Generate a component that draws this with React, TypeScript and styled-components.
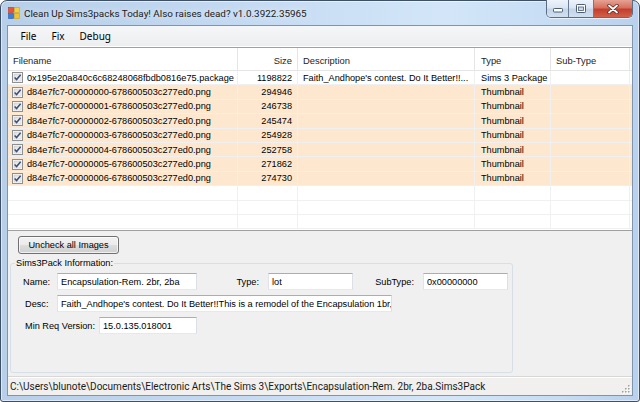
import { FC } from "react";
import styled, { createGlobalStyle } from "styled-components";

interface IPackageFile {
  name: string;
  size: string;
  description: string;
  type: string;
  subType: string;
  isImage: boolean;
}

const thumbSizes = ["294946", "246738", "245474", "254928", "252758", "271862", "274730"];

const files: IPackageFile[] = [
  {
    name: "0x195e20a840c6c68248068fbdb0816e75.package",
    size: "1198822",
    description: "Faith_Andhope's contest. Do It Better!!...",
    type: "Sims 3 Package",
    subType: "",
    isImage: false,
  },
  ...thumbSizes.map((size, i) => ({
    name: `d84e7fc7-0000000${i}-678600503c277ed0.png`,
    size,
    description: "",
    type: "Thumbnail",
    subType: "",
    isImage: true,
  })),
];

const FILLER_ROWS = 3;

const AppIcon: FC = () => (
  <svg width="12" height="12" viewBox="0 0 12 12">
    <rect x="0.5" y="0.5" width="5" height="5" fill="#e8553a" stroke="#b23a22" strokeWidth="0.6" />
    <rect x="6.5" y="0.5" width="5" height="5" fill="#f7cf3a" stroke="#c9a020" strokeWidth="0.6" />
    <rect x="0.5" y="6.5" width="5" height="5" fill="#3d7fd6" stroke="#275ea8" strokeWidth="0.6" />
    <rect x="6.5" y="6.5" width="5" height="5" fill="#f5c12c" stroke="#c9a020" strokeWidth="0.6" />
  </svg>
);

const MinGlyph: FC = () => (
  <svg width="10" height="5" viewBox="0 0 10 5">
    <rect x="0.5" y="0.5" width="9" height="3.5" rx="0.8" fill="#fff" stroke="#4d5d72" strokeWidth="1" />
  </svg>
);

const MaxGlyph: FC = () => (
  <svg width="10" height="9" viewBox="0 0 10 9">
    <rect x="0.5" y="0.5" width="9" height="8" rx="0.8" fill="#fff" stroke="#4d5d72" strokeWidth="1" />
    <rect x="2.5" y="3" width="5" height="3.5" fill="#c9d8ea" stroke="#4d5d72" strokeWidth="0.8" />
  </svg>
);

const CloseGlyph: FC = () => (
  <svg width="12" height="10" viewBox="0 0 12 10">
    <path d="M2 1.5 L10 8.5 M10 1.5 L2 8.5" stroke="#5a2a24" strokeWidth="3.4" strokeLinecap="round" />
    <path d="M2 1.5 L10 8.5 M10 1.5 L2 8.5" stroke="#fff" strokeWidth="1.8" strokeLinecap="round" />
  </svg>
);

const CheckMark: FC = () => (
  <svg width="11" height="11" viewBox="0 0 11 11">
    <defs>
      <linearGradient id="cbFill" x1="0" y1="0" x2="1" y2="1">
        <stop offset="0" stopColor="#dcdcdc" />
        <stop offset="1" stopColor="#fbfbfb" />
      </linearGradient>
    </defs>
    <rect x="0.5" y="0.5" width="10" height="10" fill="#fff" stroke="#8e8f8f" />
    <rect x="2" y="2" width="7" height="7" fill="url(#cbFill)" stroke="#c6c6c6" strokeWidth="0.6" />
    <path d="M2.6 5.4 L4.6 7.6 L8.6 2.8" fill="none" stroke="#3c4f7a" strokeWidth="1.5" />
  </svg>
);

const SizeGrip: FC = () => (
  <svg width="10" height="10" viewBox="0 0 10 10">
    {[
      [8, 2],
      [8, 5],
      [5, 5],
      [8, 8],
      [5, 8],
      [2, 8],
    ].map(([x, y]) => (
      <g key={`${x}-${y}`}>
        <rect x={x} y={y} width="1.5" height="1.5" fill="#fff" />
        <rect x={x - 1} y={y - 1} width="1.5" height="1.5" fill="#a0a0a0" />
      </g>
    ))}
  </svg>
);

const App: FC = () => {
  return (
    <>
      <GlobalStyle />
      <Window>
        <TitleBar>
          <AppIcon />
          <Title>Clean Up Sims3packs Today! Also raises dead? v1.0.3922.35965</Title>
          <CaptionButtons>
            <CaptionButton $w={21} $kind="min">
              <MinGlyph />
            </CaptionButton>
            <CaptionButton $w={25} $kind="max">
              <MaxGlyph />
            </CaptionButton>
            <CaptionButton $w={39} $kind="close">
              <CloseGlyph />
            </CaptionButton>
          </CaptionButtons>
        </TitleBar>

        <Client>
          <MenuBar>
            <MenuItem>File</MenuItem>
            <MenuItem>Fix</MenuItem>
            <MenuItem>Debug</MenuItem>
          </MenuBar>

          <ListView>
            <HeaderRow>
              <HeaderCell>Filename</HeaderCell>
              <HeaderCell $right>Size</HeaderCell>
              <HeaderCell>Description</HeaderCell>
              <HeaderCell $pad={6}>Type</HeaderCell>
              <HeaderCell>Sub-Type</HeaderCell>
            </HeaderRow>
            {files.map((f) => (
              <Row key={f.name} $peach={f.isImage}>
                <NameCell>
                  <CheckMark />
                  <span>{f.name}</span>
                </NameCell>
                <Cell $right>{f.size}</Cell>
                <Cell>{f.description}</Cell>
                <Cell $pad={6}>{f.type}</Cell>
                <Cell>{f.subType}</Cell>
              </Row>
            ))}
            {Array.from({ length: FILLER_ROWS }).map((_, i) => (
              <Row key={`filler-${i}`}>
                <Cell />
                <Cell />
                <Cell />
                <Cell />
                <Cell />
              </Row>
            ))}
          </ListView>

          <Panel>
            <PushButton>Uncheck all Images</PushButton>
            <GroupBox>
              <legend>Sims3Pack Information:</legend>
              <FieldRow>
                <FieldLabel $w={46} $indent={12}>
                  Name:
                </FieldLabel>
                <TextBox $w={140}>Encapsulation-Rem. 2br, 2ba</TextBox>
                <FieldLabel $w={71} $right>
                  Type:
                </FieldLabel>
                <TextBox $w={85}>lot</TextBox>
                <FieldLabel $w={70} $right>
                  SubType:
                </FieldLabel>
                <TextBox $w={85}>0x00000000</TextBox>
              </FieldRow>
              <FieldRow>
                <FieldLabel $w={46} $indent={14}>
                  Desc:
                </FieldLabel>
                <TextBox $w={335}>
                  Faith_Andhope's contest. Do It Better!!This is a remodel of the Encapsulation 1br,
                </TextBox>
              </FieldRow>
              <FieldRow>
                <FieldLabel $w={88} $indent={14}>
                  Min Req Version:
                </FieldLabel>
                <TextBox $w={98}>15.0.135.018001</TextBox>
              </FieldRow>
            </GroupBox>
          </Panel>

          <StatusBar>
            <StatusText>
              C:\Users\blunote\Documents\Electronic Arts\The Sims 3\Exports\Encapsulation-Rem. 2br, 2ba.Sims3Pack
            </StatusText>
            <SizeGrip />
          </StatusBar>
        </Client>
      </Window>
    </>
  );
};

export default App;

const captionFont = `Roboto, "Noto Sans", sans-serif`;
const menuFont = `"Noto Sans", sans-serif`;
const listFont = `"Liberation Sans", Arial, sans-serif`;
const columns = "230px 60px 177px 76px 79px";

const GlobalStyle = createGlobalStyle`
  html, body {
    margin: 0;
    padding: 0;
    background: #fff;
    overflow: hidden;
  }
`;

const Window = styled.div`
  width: 640px;
  height: 402px;
  box-sizing: border-box;
  display: flex;
  flex-direction: column;
  padding: 0 6px 5px;
  border: 1px solid #3e5068;
  border-radius: 7px 7px 3px 3px;
  background: linear-gradient(
    to right,
    #b7cfe9 0%,
    #c3d9f1 35%,
    #d3e6f9 70%,
    #c5dcf3 88%,
    #b9d1ec 100%
  );
  box-shadow: inset 0 0 0 1px rgba(255, 255, 255, 0.55);
`;

const TitleBar = styled.div`
  height: 24px;
  display: flex;
  align-items: center;
  padding-left: 1px;
  gap: 4px;
`;

const Title = styled.div`
  font-family: ${captionFont};
  font-size: 9.9px;
  color: #1a1a1a;
  white-space: nowrap;
  text-shadow: 0 0 6px rgba(255, 255, 255, 0.9);
`;

const CaptionButtons = styled.div`
  display: flex;
  align-self: flex-start;
  margin: -1px 0 0 auto;
  border: 1px solid #5b6d84;
  border-top: none;
  border-radius: 0 0 5px 5px;
  overflow: hidden;
  box-shadow: 0 1px 0 rgba(255, 255, 255, 0.6);
`;

interface CaptionProps {
  $w: number;
  $kind: "min" | "max" | "close";
}

const CaptionButton = styled.div<CaptionProps>`
  width: ${(p) => p.$w}px;
  height: 17px;
  display: flex;
  align-items: center;
  justify-content: center;
  box-sizing: border-box;
  border-left: ${(p) => (p.$kind === "min" ? "none" : "1px solid #6a7c93")};
  background: ${(p) =>
    p.$kind === "close"
      ? "linear-gradient(#e5a394 0%, #d86f5d 45%, #c23f2c 55%, #d1604b 100%)"
      : "linear-gradient(#eef3fa 0%, #dbe6f3 45%, #c4d5e9 55%, #d1e0f1 100%)"};
  padding-top: ${(p) => (p.$kind === "min" ? "4px" : "0")};
`;

const Client = styled.div`
  flex: 1;
  min-height: 0;
  display: flex;
  flex-direction: column;
  background: #f0f0f0;
  border: 1px solid #7f94ad;
`;

const MenuBar = styled.div`
  height: 20px;
  display: flex;
  align-items: center;
  padding-left: 5px;
  background: linear-gradient(#f5f6f7, #eceef0);
  border-bottom: 1px solid #ffffff;
`;

const MenuItem = styled.div`
  font-family: ${menuFont};
  font-size: 10px;
  color: #000;
  padding: 0 7.5px;
`;

const ListView = styled.div`
  height: 182px;
  overflow: hidden;
  background: #fff;
  border-top: 1px solid #a0a0a0;
  border-bottom: 1px solid #a0a0a0;
`;

const HeaderRow = styled.div`
  display: grid;
  grid-template-columns: ${columns};
  height: 23px;
  border-bottom: 1px solid #e5e5e5;
  box-sizing: border-box;
`;

interface CellProps {
  $right?: boolean;
  $pad?: number;
}

const HeaderCell = styled.div<CellProps>`
  display: flex;
  align-items: center;
  justify-content: ${(p) => (p.$right ? "flex-end" : "flex-start")};
  padding: ${(p) => (p.$right ? "2px 5px 0 0" : `2px 0 0 ${p.$pad ?? 5}px`)};
  border-right: 1px solid #e5e5e5;
  font-family: ${listFont};
  font-size: 9.4px;
  color: #1e1e1e;
`;

const Row = styled.div<{ $peach?: boolean }>`
  display: grid;
  grid-template-columns: ${columns};
  height: 14.4px;
  box-sizing: border-box;
  background: ${(p) => (p.$peach ? "#fde8cf" : "#fff")};
  border-bottom: 1px solid #f0f0f0;
`;

const Cell = styled.div<CellProps>`
  display: flex;
  align-items: center;
  justify-content: ${(p) => (p.$right ? "flex-end" : "flex-start")};
  padding: ${(p) => (p.$right ? "0 5px 0 0" : `0 0 0 ${p.$pad ?? 5}px`)};
  border-right: 1px solid #f0f0f0;
  font-family: ${listFont};
  font-size: 9.2px;
  color: #000;
  white-space: nowrap;
  overflow: hidden;
`;

const NameCell = styled(Cell)`
  padding-left: 4px;
  gap: 4px;
`;

const Panel = styled.div`
  flex: 1;
  min-height: 0;
  display: flex;
  flex-direction: column;
  align-items: flex-start;
  padding: 5px 0 3px 2px;
`;

const PushButton = styled.div`
  margin-left: 8px;
  width: 101px;
  height: 18px;
  box-sizing: border-box;
  display: flex;
  align-items: center;
  justify-content: center;
  border: 1px solid #707070;
  border-radius: 3px;
  background: linear-gradient(#f2f2f2 0%, #ebebeb 48%, #dddddd 52%, #cfcfcf 100%);
  box-shadow: inset 0 0 0 1px rgba(255, 255, 255, 0.7);
  font-family: ${listFont};
  font-size: 9.2px;
  color: #000;
`;

const GroupBox = styled.fieldset`
  flex: 1;
  width: 503px;
  box-sizing: border-box;
  margin: 4px 0 0;
  padding: 0;
  border: 1px solid #d5dfe5;
  border-radius: 3px;
  display: flex;
  flex-direction: column;
  gap: 5px;

  legend {
    margin-left: 4px;
    padding: 0 1px;
    font-family: ${listFont};
    font-size: 9.2px;
    color: #000;
  }
`;

const FieldRow = styled.div`
  display: flex;
  align-items: center;
  &:first-of-type {
    margin-top: 5px;
  }
`;

interface LabelProps {
  $w: number;
  $indent?: number;
  $right?: boolean;
}

const FieldLabel = styled.div<LabelProps>`
  width: ${(p) => p.$w}px;
  box-sizing: border-box;
  padding: ${(p) => (p.$right ? "0 9px 0 0" : `0 0 0 ${p.$indent ?? 0}px`)};
  text-align: ${(p) => (p.$right ? "right" : "left")};
  font-family: ${listFont};
  font-size: 9.2px;
  color: #000;
  white-space: nowrap;
`;

const TextBox = styled.div<{ $w: number }>`
  width: ${(p) => p.$w}px;
  height: 17px;
  box-sizing: border-box;
  display: flex;
  align-items: center;
  padding-left: 3px;
  background: #fff;
  border: 1px solid;
  border-color: #abadb3 #dbdfe6 #e3e9ef #e2e3ea;
  font-family: ${listFont};
  font-size: 9.2px;
  color: #000;
  white-space: nowrap;
  overflow: hidden;
`;

const StatusBar = styled.div`
  height: 19px;
  box-sizing: border-box;
  display: flex;
  align-items: center;
  justify-content: space-between;
  padding: 0 0 0 2px;
  background: #f1f0ee;
  border-top: 1px solid #d7d7d7;
  box-shadow: inset 0 1px 0 #ffffff;

  svg {
    align-self: flex-end;
    margin: 0 1px 1px 0;
  }
`;

const StatusText = styled.div`
  font-family: ${captionFont};
  font-size: 10px;
  color: #1a1a1a;
  white-space: nowrap;
`;
